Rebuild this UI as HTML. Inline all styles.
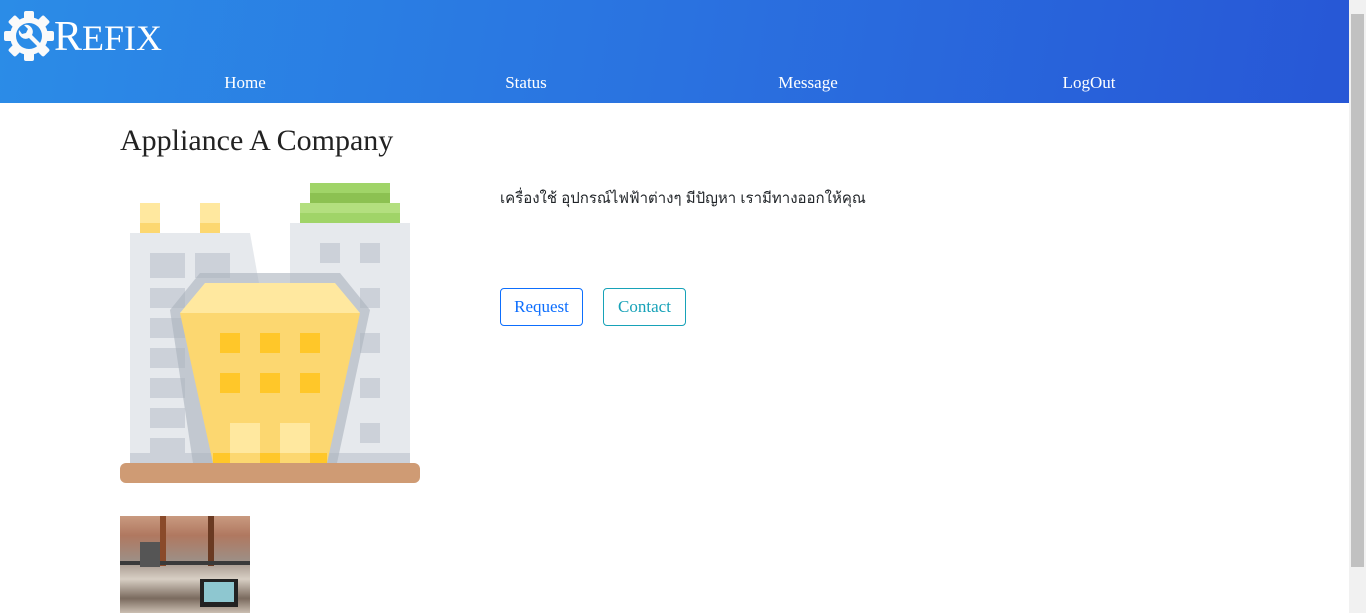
<!DOCTYPE html>
<html><head><meta charset="utf-8"><style>
html,body{margin:0;padding:0;width:1366px;height:613px;overflow:hidden;background:#fff;font-family:"Liberation Serif",serif}
.nav{position:absolute;left:0;top:0;width:1349px;height:103px;background:linear-gradient(100deg,#2b8ce7 0%,#2a72e0 50%,#2757d6 100%)}
.logo{position:absolute;left:54px;top:13px;color:#fff;font-size:36px;font-family:"Liberation Serif",serif}
.logo span{font-size:42px}
.nav a{position:absolute;top:73px;color:#fff;font-size:17px;text-decoration:none;transform:translateX(-50%)}
.sb{position:absolute;right:0;top:0;width:17px;height:613px;background:#f1f1f1}
.sb div{position:absolute;left:2px;top:14px;width:13px;height:553px;background:#c1c1c1}
h1{position:absolute;left:120px;top:124px;margin:0;font-weight:400;font-size:30px;color:#222}
.thai{position:absolute;left:500px;top:186px;font-family:"Liberation Sans","Noto Sans CJK SC",sans-serif;font-size:15px;color:#212529}
.btn{position:absolute;top:288px;height:38px;border-radius:4px;font-size:17px;line-height:36px;text-align:center;box-sizing:border-box}
.photo{position:absolute;left:120px;top:516px;width:130px;height:97px;overflow:hidden;background:linear-gradient(180deg,#c99a80 0%,#b07860 20%,#9e8e84 45%,#d8cfc4 65%,#7a6a5e 85%,#cbbfb2 100%)}
</style></head><body>
<div class="nav">
<svg style="position:absolute;left:3px;top:10px" width="52" height="52" viewBox="0 0 52 52">
<g fill="#fafafa" transform="translate(26,26)">
<rect x="-5" y="-25" width="10" height="50" rx="2"/>
<rect x="-5" y="-25" width="10" height="50" rx="2" transform="rotate(45)"/>
<rect x="-5" y="-25" width="10" height="50" rx="2" transform="rotate(90)"/>
<rect x="-5" y="-25" width="10" height="50" rx="2" transform="rotate(135)"/>
<circle r="19"/>
</g>
<circle cx="26" cy="26" r="13" fill="#2b8ce7"/>
<path d="M16 20 a7 7 0 0 0 10 8 l10 10 l3 -3 l-10 -10 a7 7 0 0 0 -8 -10 l4 4 l-2 4 l-4 1z" fill="#fafafa"/>
</svg>
<div class="logo"><span>R</span>EFIX</div>
<a style="left:245px">Home</a><a style="left:526px">Status</a><a style="left:808px">Message</a><a style="left:1089px">LogOut</a>
</div>
<div class="sb"><div></div></div>
<h1>Appliance A Company</h1>
<svg style="position:absolute;left:0;top:0" width="440" height="490">
<rect x="310" y="183" width="80" height="10" fill="#a0d468"/><rect x="310" y="193" width="80" height="10" fill="#8cc152"/>
<rect x="300" y="203" width="100" height="10" fill="#b3df7f"/><rect x="300" y="213" width="100" height="10" fill="#a0d468"/>
<rect x="140" y="203" width="20" height="20" fill="#ffe89f"/><rect x="140" y="223" width="20" height="10" fill="#fcd770"/>
<rect x="200" y="203" width="20" height="20" fill="#ffe89f"/><rect x="200" y="223" width="20" height="10" fill="#fcd770"/>
<polygon points="130,233 250,233 262,300 262,463 130,463" fill="#e6e9ed"/>
<rect x="290" y="223" width="120" height="240" fill="#e6e9ed"/>
<g fill="#ccd1d9">
<rect x="150" y="253" width="35" height="25"/><rect x="195" y="253" width="35" height="25"/>
<rect x="150" y="288" width="35" height="20"/><rect x="150" y="318" width="35" height="20"/><rect x="150" y="348" width="35" height="20"/><rect x="150" y="378" width="35" height="20"/><rect x="150" y="408" width="35" height="20"/><rect x="150" y="438" width="35" height="15"/>
<rect x="320" y="243" width="20" height="20"/><rect x="360" y="243" width="20" height="20"/>
<rect x="360" y="288" width="20" height="20"/><rect x="360" y="333" width="20" height="20"/><rect x="360" y="378" width="20" height="20"/><rect x="360" y="423" width="20" height="20"/>
<rect x="130" y="453" width="280" height="10"/>
</g>
<polygon points="200,273 340,273 370,310 337,463 193,463 170,310" fill="#aab2bd" opacity="0.6"/>
<polygon points="205,283 335,283 360,313 180,313" fill="#ffe89f"/>
<polygon points="180,313 360,313 327,463 213,463" fill="#fcd770"/>
<g fill="#ffc729">
<rect x="220" y="333" width="20" height="20"/><rect x="260" y="333" width="20" height="20"/><rect x="300" y="333" width="20" height="20"/>
<rect x="220" y="373" width="20" height="20"/><rect x="260" y="373" width="20" height="20"/><rect x="300" y="373" width="20" height="20"/>
<rect x="213" y="453" width="114" height="10"/>
</g>
<rect x="230" y="423" width="30" height="30" fill="#ffe89f"/><rect x="280" y="423" width="30" height="30" fill="#ffe89f"/>
<rect x="230" y="453" width="30" height="10" fill="#fcd770"/><rect x="280" y="453" width="30" height="10" fill="#fcd770"/>
<rect x="120" y="463" width="300" height="20" rx="6" fill="#cf9b74"/>
</svg>
<div class="thai">เครื่องใช้ อุปกรณ์ไฟฟ้าต่างๆ มีปัญหา เรามีทางออกให้คุณ</div>
<div class="btn" style="left:500px;width:83px;border:1px solid #0d6efd;color:#0d6efd">Request</div>
<div class="btn" style="left:603px;width:83px;border:1px solid #17a2b8;color:#17a2b8">Contact</div>
<div class="photo">
<div style="position:absolute;left:40px;top:0;width:6px;height:50px;background:#8a4a2a"></div>
<div style="position:absolute;left:88px;top:0;width:6px;height:50px;background:#6a3a22"></div>
<div style="position:absolute;left:0;top:45px;width:130px;height:4px;background:#3a3a3a"></div>
<div style="position:absolute;left:80px;top:63px;width:38px;height:28px;background:#222"></div>
<div style="position:absolute;left:84px;top:66px;width:30px;height:20px;background:#8ec7d0"></div>
<div style="position:absolute;left:20px;top:26px;width:20px;height:25px;background:#555"></div>
</div>
</body></html>
